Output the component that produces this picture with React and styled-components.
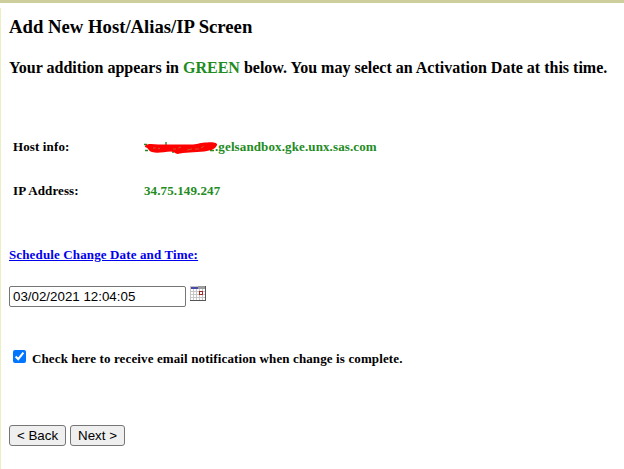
import React from "react";
import styled, { createGlobalStyle } from "styled-components";

const GlobalStyle = createGlobalStyle`
  * { box-sizing: border-box; }
  body {
    margin: 0;
    background: #fff;
    color: #000;
    font-family: "Liberation Serif", "Times New Roman", serif;
    overflow: hidden;
  }
`;

const Page = styled.div`
  height: 469px;
  display: flex;
  flex-direction: column;
`;

const TopRule = styled.div`
  height: 3px;
  margin-bottom: 5px;
  flex: none;
  background: #cece9c;
`;

const Content = styled.main`
  flex: 1;
  display: flex;
  flex-direction: column;
  align-items: flex-start;
  padding: 8px 0 0 8px;
  border-left: 1px solid #eeeec4;
`;

const Title = styled.h1`
  margin: 0;
  font-size: 18.72px;
  line-height: 22px;
  white-space: nowrap;
`;

const Subtitle = styled.h2`
  margin: 19px 0 0;
  font-size: 16px;
  line-height: 22px;
  white-space: nowrap;
`;

const Green = styled.span`
  color: #228b22;
`;

const Details = styled.dl`
  display: grid;
  grid-template-columns: 131px auto;
  row-gap: 28px;
  margin: 60px 0 0 4px;
  font-size: 13px;
  font-weight: bold;
  line-height: 16px;
  letter-spacing: 0.12px;
`;

const Term = styled.dt`
  white-space: nowrap;
`;

const Value = styled.dd`
  display: flex;
  margin: 0;
  color: #228b22;
`;

const Scribble = styled.svg`
  width: 71px;
  height: 16px;
  flex: none;
  overflow: visible;
`;

const ScheduleLink = styled.a`
  margin-top: 48px;
  font-size: 13px;
  font-weight: bold;
  line-height: 16px;
  letter-spacing: 0.13px;
  color: #0000ee;
  text-decoration: underline;
`;

const DateRow = styled.div`
  display: flex;
  margin-top: 23px;
  gap: 4px;
`;

const DateInput = styled.input`
  width: 177px;
  height: 21px;
  padding: 1px 3px;
  border: 1px solid #767676;
  border-radius: 2px;
  background: #fff;
  color: #000;
  font: 13.333px "Liberation Sans", Arial, sans-serif;
  outline: none;
`;

const CalendarIcon = styled.svg`
  width: 16px;
  height: 15px;
`;

const NotifyRow = styled.label`
  display: flex;
  margin: 43px 0 0 4px;
  font-size: 13px;
  font-weight: bold;
  line-height: 18px;
  letter-spacing: 0.12px;
  white-space: nowrap;
`;

const Checkbox = styled.input`
  width: 13px;
  height: 13px;
  margin: 0 6px 0 0;
  accent-color: #0075ff;
`;

const Buttons = styled.div`
  display: flex;
  gap: 4px;
  margin-top: 57px;
`;

const Button = styled.button`
  width: ${(p) => p.$width}px;
  height: 21px;
  padding: 0;
  border: 1px solid #767676;
  border-radius: 3px;
  background: #efefef;
  color: #000;
  font: 13.333px "Liberation Sans", Arial, sans-serif;
`;

function Redaction() {
  return (
    <Scribble viewBox="0 0 71 16" aria-hidden="true">
      <path d="M0 5.500h3M1 11.500h3M22 3v3M28 13h2M67 10v2M66 11.500h4" stroke="#228b22" strokeWidth="1.4" fill="none" />
      <path
        d="M1 7 C3 4 9 5 14 5.500 L49 5.500 C54 5 57 3.500 63 3.500 C69 2.500 74 4 73 6 C72 9 69 11 63 12 C56 13.500 43 13 36 14.500 C31 16 32 13 27 12.500 C20 12.500 14 15 8 13 C4 12 5 9 1 8 Z"
        fill="#fe0000"
      />
      <path d="M9 9h3M14 9.500h2M29 10h3M34 9l3-1M43 11l5-1M51 10h4M57 9l3-2" stroke="#b76b32" strokeWidth="0.8" />
    </Scribble>
  );
}

function Calendar() {
  return (
    <CalendarIcon viewBox="0 0 16 15" shapeRendering="crispEdges" aria-hidden="true">
      <path fill="#c6c6c6" d="M0 0h16v15H0z" />
      <path fill="#fff" d="M1 3h2v2H1zM4 3h2v2H4zM7 3h2v2H7zM10 3h2v2h-2zM13 3h2v2h-2zM1 6h2v2H1zM4 6h2v2H4zM7 6h2v2H7zM10 6h2v2h-2zM13 6h2v2h-2zM1 9h2v2H1zM4 9h2v2H4zM7 9h2v2H7zM10 9h2v2h-2zM13 9h2v2h-2zM1 12h2v2H1zM4 12h2v2H4zM7 12h2v2H7zM10 12h2v2h-2zM13 12h2v2h-2z" />
      <path fill="#9c9c9c" d="M8 0h8v3H8z" />
      <path fill="#4a4aad" d="M1 1h7v2H1z" />
      <path fill="#555" d="M15 0h1v15h-1zM0 14h16v1H0z" />
      <path fill="#a52a2a" d="M9 5h4v4H9z" />
      <path fill="#fff" d="M10 6h2v2h-2z" />
    </CalendarIcon>
  );
}

export default function App() {
  return (
    <>
      <GlobalStyle />
      <Page>
        <TopRule />
        <Content>
          <Title>Add New Host/Alias/IP Screen</Title>
          <Subtitle>
            Your addition appears in <Green>GREEN</Green> below. You may select an Activation Date at this time.
          </Subtitle>
          <Details>
            <Term>Host info:</Term>
            <Value>
              <Redaction />
              .gelsandbox.gke.unx.sas.com
            </Value>
            <Term>IP Address:</Term>
            <Value>34.75.149.247</Value>
          </Details>
          <ScheduleLink href="#">Schedule Change Date and Time:</ScheduleLink>
          <DateRow>
            <DateInput defaultValue="03/02/2021 12:04:05" aria-label="Change date and time" />
            <Calendar />
          </DateRow>
          <NotifyRow>
            <Checkbox type="checkbox" defaultChecked />
            Check here to receive email notification when change is complete.
          </NotifyRow>
          <Buttons>
            <Button $width={57}>&lt; Back</Button>
            <Button $width={55}>Next &gt;</Button>
          </Buttons>
        </Content>
      </Page>
    </>
  );
}
